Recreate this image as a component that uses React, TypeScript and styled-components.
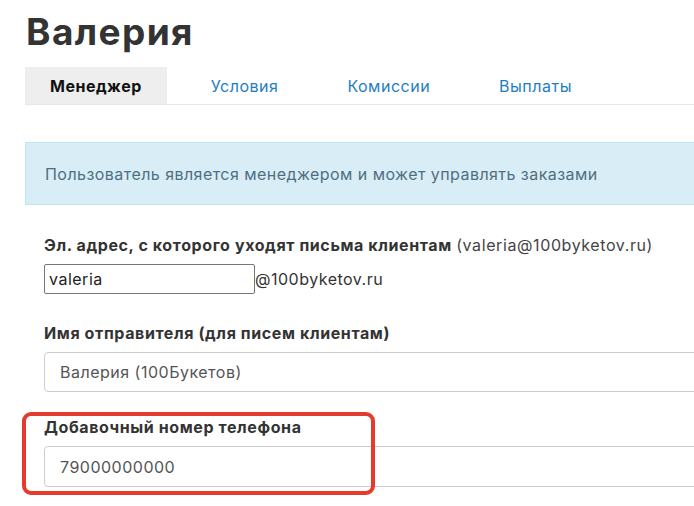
import React from 'react';
import styled, { createGlobalStyle } from 'styled-components';

const GlobalStyle = createGlobalStyle`
  html, body {
    margin: 0;
    padding: 0;
    background: #fff;
    overflow: hidden;
  }
  body {
    font-family: Inter, 'Noto Sans', 'Liberation Sans', sans-serif;
    color: #333;
    letter-spacing: 0.5px;
  }
`;

const Page = styled.div`
  width: 760px;
  padding: 9px 0 0 25px;
`;

const Title = styled.h1`
  margin: 0 0 12px 1px;
  font-size: 37px;
  line-height: 46px;
  font-weight: 700;
  color: #333;
  letter-spacing: 1.4px;
`;

const Tabs = styled.ul`
  display: flex;
  gap: 19px;
  margin: 0;
  padding: 0;
  list-style: none;
  border-bottom: 1px solid #e8e8e8;
`;

const Tab = styled.li<{ $active?: boolean }>`
  height: 37px;
  display: flex;
  align-items: center;
  padding: 0 25px;
  font-size: 16px;
  font-weight: ${(p) => (p.$active ? 700 : 400)};
  color: ${(p) => (p.$active ? '#111' : '#1f7ec2')};
  background: ${(p) => (p.$active ? '#eeeeee' : 'transparent')};
`;

const Alert = styled.div`
  margin-top: 37px;
  height: 61px;
  display: flex;
  align-items: center;
  padding: 0 19px;
  background: #d9edf7;
  border: 1px solid #bce8f1;
  font-size: 16px;
  color: #4f6f80;
  letter-spacing: 0.45px;
`;

const Form = styled.div`
  padding: 30px 0 0 19px;
`;

const Group = styled.div<{ $gap?: number }>`
  position: relative;
  margin-bottom: ${(p) => p.$gap ?? 25}px;
`;

const Label = styled.div`
  font-size: 16px;
  line-height: 20px;
  font-weight: 700;
  color: #333;
  margin-bottom: 9px;
  letter-spacing: 0.6px;
`;

const Hint = styled.span`
  font-weight: 400;
  color: #444;
`;

const EmailRow = styled.div`
  display: flex;
  align-items: center;
  font-size: 16px;
  color: #333;
`;

const SmallInput = styled.input`
  box-sizing: border-box;
  width: 211px;
  height: 30px;
  padding: 0 4px;
  border: 1px solid #767676;
  border-radius: 2px;
  font-family: inherit;
  font-size: 16px;
  letter-spacing: inherit;
  color: #222;
  outline: none;
`;

const Input = styled.input<{ $height?: number }>`
  box-sizing: border-box;
  display: block;
  width: 100%;
  height: ${(p) => p.$height ?? 40}px;
  padding: 0 15px;
  border: 1px solid #cccccc;
  border-radius: 4px;
  font-family: inherit;
  font-size: 16px;
  letter-spacing: inherit;
  color: #555;
  background: #fff;
  outline: none;
`;

const Highlight = styled.div`
  position: absolute;
  left: -22px;
  top: -5px;
  width: 353px;
  height: 83px;
  box-sizing: border-box;
  border: 4px solid #e53b2f;
  border-radius: 9px;
  pointer-events: none;
`;

const tabs = ['Менеджер', 'Условия', 'Комиссии', 'Выплаты'];

export default function App() {
  return (
    <>
      <GlobalStyle />
      <Page>
        <Title>Валерия</Title>
        <Tabs>
          {tabs.map((t, i) => (
            <Tab key={t} $active={i === 0}>
              {t}
            </Tab>
          ))}
        </Tabs>
        <Alert>Пользователь является менеджером и может управлять заказами</Alert>
        <Form>
          <Group $gap={29}>
            <Label>
              Эл. адрес, с которого уходят письма клиентам <Hint>(valeria@100byketov.ru)</Hint>
            </Label>
            <EmailRow>
              <SmallInput defaultValue="valeria" />
              @100byketov.ru
            </EmailRow>
          </Group>
          <Group>
            <Label>Имя отправителя (для писем клиентам)</Label>
            <Input defaultValue="Валерия (100Букетов)" />
          </Group>
          <Group>
            <Label>Добавочный номер телефона</Label>
            <Input $height={41} defaultValue="79000000000" />
            <Highlight />
          </Group>
        </Form>
      </Page>
    </>
  );
}
